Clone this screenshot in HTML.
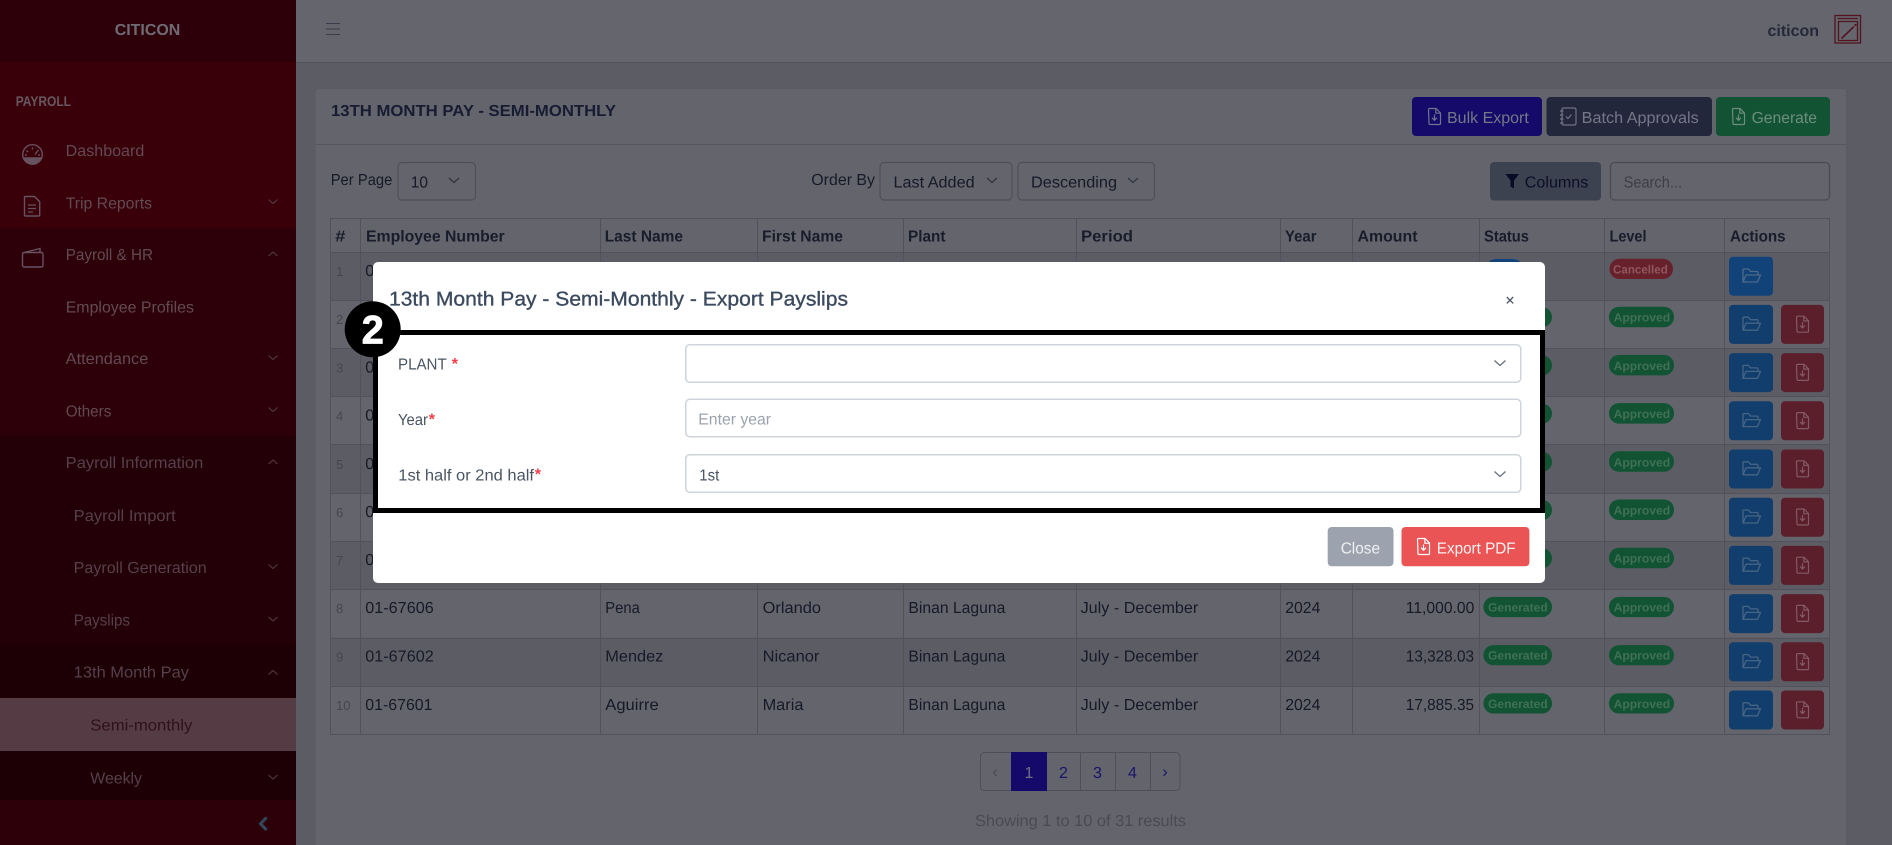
<!DOCTYPE html>
<html lang="en">
<head>
<meta charset="utf-8">
<title>13th Month Pay - Semi-Monthly - Export Payslips</title>
<style>
html,body{margin:0;padding:0;width:1892px;height:845px;overflow:hidden;background:#767681}
svg{display:block}
text{font-family:"Liberation Sans",sans-serif;font-size:16px;text-rendering:geometricPrecision}
.nav{fill:#7e5f6b}.sub{fill:#6e5260}
.th{font-weight:700;fill:#1f2438}
.td{fill:#1d2133}.num{fill:#5a5a68;font-size:13px}
.bd{font-size:12px;font-weight:700;fill:#54906f}
.lbl{fill:#4b5563}.star{fill:#f43f4a;font-weight:700}
.wb{fill:#9499ac}
.chev{fill:none;stroke:#6f5060;stroke-width:1}
.sel{fill:none;stroke:#3f4356;stroke-width:1.3}
.ctl{fill:none;stroke:#666675;stroke-width:1.2}
.mchev{fill:none;stroke:#6b7280;stroke-width:1.3}
</style>
</head>
<body>
<svg xmlns="http://www.w3.org/2000/svg" width="1892" height="845" viewBox="0 0 1892 845">
<defs>
<g id="file"><path d="M1.500 1.500a1 1 0 0 1 1-1h6.500l4.500 4.500v10.500a1 1 0 0 1-1 1h-9.500a1 1 0 0 1-1-1z" fill="none" stroke="currentColor" stroke-width="1.200"/><path d="M8.800 .7v4.500h4.500M7.500 6.500v5.500M5 9.800l2.500 2.500 2.500-2.500" fill="none" stroke="currentColor" stroke-width="1.200"/></g>
<g id="folder"><path d="M1 15V3a1 1 0 0 1 1-1h4.500l2 2.500h6.500a1 1 0 0 1 1 1V8M1 15l3-7h14.500l-3 7z" fill="none" stroke="currentColor" stroke-width="1.300" stroke-linejoin="round"/></g>
<g id="acts">
<rect x="1729" y="4.700" width="44" height="39" rx="4" fill="#16508c"/>
<use href="#folder" x="1742" y="15" color="#5a80a8"/>
<rect x="1781" y="4.700" width="43" height="39" rx="4" fill="#742836"/>
<use href="#file" x="1795" y="15.500" color="#a8747e"/>
</g>
<g id="blueact">
<rect x="1729" y="4.700" width="44" height="39" rx="4" fill="#16569c"/>
<use href="#folder" x="1742" y="15" color="#6388b0"/>
</g>
</defs>

<!-- sidebar -->
<rect width="296" height="845" fill="#3a000c"/>
<rect y="62" width="296" height="166" fill="#4a000c"/>
<rect y="436" width="296" height="209" fill="#2e0009"/>
<rect y="645" width="296" height="155" fill="#260008"/>
<rect y="698" width="296" height="53" fill="#6e4d58"/>
<text x="114.700" y="35" textLength="65.600" lengthAdjust="spacingAndGlyphs" font-weight="700" fill="#8f8a97">CITICON</text>
<text x="15.700" y="106" textLength="55.300" lengthAdjust="spacingAndGlyphs" font-weight="700" style="font-size:14px" fill="#85707c">PAYROLL</text>

<g fill="none" stroke="#85697a" stroke-width="1.400">
<circle cx="32.500" cy="154.500" r="9.800"/>
<path d="M23.500 158h18a10 10 0 0 1-18 0z" fill="#85697a"/>
<path d="M32.500 147.500v2M26.500 150.500l1.500 1.500M38.500 150l-3.500 4.500M25 155h1.800M38.200 155H40"/>
<path d="M25.500 197h9l5.200 5.200v13.300a1 1 0 0 1-1 1H25.500a1 1 0 0 1-1-1V198a1 1 0 0 1 1-1z" transform="translate(0,-.5)"/>
<path d="M28 205h8M28 208.500h8M28 212h5" stroke-width="1.200"/>
<rect x="22.500" y="252.500" width="20.500" height="14.500" rx="1.500"/>
<path d="M24 252.500l16-4v4"/>
</g>

<text class="nav" x="65.700" y="155.800" textLength="78.600" lengthAdjust="spacingAndGlyphs">Dashboard</text>
<text class="nav" x="65.700" y="208.500" textLength="86.300" lengthAdjust="spacingAndGlyphs">Trip Reports</text>
<text class="nav" x="65.700" y="260" textLength="87.300" lengthAdjust="spacingAndGlyphs">Payroll &amp; HR</text>
<text class="nav" x="65.700" y="312.500" textLength="128.300" lengthAdjust="spacingAndGlyphs">Employee Profiles</text>
<text class="nav" x="65.700" y="364" textLength="82.600" lengthAdjust="spacingAndGlyphs">Attendance</text>
<text class="nav" x="65.700" y="416.500" textLength="45.600" lengthAdjust="spacingAndGlyphs">Others</text>
<text class="sub" x="65.700" y="468" textLength="137.600" lengthAdjust="spacingAndGlyphs">Payroll Information</text>
<text class="sub" x="73.700" y="521" textLength="102" lengthAdjust="spacingAndGlyphs">Payroll Import</text>
<text class="sub" x="73.700" y="573" textLength="133" lengthAdjust="spacingAndGlyphs">Payroll Generation</text>
<text class="sub" x="73.700" y="625.500" textLength="56.300" lengthAdjust="spacingAndGlyphs">Payslips</text>
<text class="sub" x="73.700" y="677.500" textLength="115.300" lengthAdjust="spacingAndGlyphs">13th Month Pay</text>
<text x="90.300" y="730.500" textLength="102" lengthAdjust="spacingAndGlyphs" fill="#3e1522">Semi-monthly</text>
<text class="sub" x="90.300" y="783.500" textLength="51.700" lengthAdjust="spacingAndGlyphs">Weekly</text>

<path class="chev" d="M268.500 199.500l4.500 4 4.500-4M268.500 256l4.500-4 4.500 4M268.500 355.500l4.500 4 4.500-4M268.500 407.500l4.500 4 4.500-4M268.500 464l4.500-4 4.500 4M268.500 564.500l4.500 4 4.500-4M268.500 617l4.500 4 4.500-4M268.500 674.500l4.500-4 4.500 4M268.500 775l4.500 4 4.500-4"/>
<path d="M266.500 817.500l-6 6.200 6 6.200" fill="none" stroke="#3f5e78" stroke-width="3"/>

<!-- main -->
<rect x="296" width="1596" height="845" fill="#767681"/>
<rect x="296" width="1596" height="62" fill="#82828c"/>
<rect x="296" y="62" width="1596" height="1" fill="#6c6c7a"/>
<path d="M326 23.500h14M326 29h14M326 34.500h14" stroke="#4a4e60" stroke-width="1" fill="none"/>
<text x="1767.500" y="36" textLength="51.500" lengthAdjust="spacingAndGlyphs" font-weight="700" fill="#2f3447">citicon</text>
<g fill="none" stroke="#6a1a28" stroke-width="1.300">
<rect x="1835" y="15.500" width="25.500" height="27.500"/>
<path d="M1837.500 18.500h20.500M1838.500 21.500h19V40.500h-19z"/>
<path d="M1841.500 38.500l12.500-12" stroke-width="1.600"/>
<circle cx="1855.500" cy="25" r=".5"/>
</g>

<!-- card -->
<rect x="315" y="88.500" width="1531.500" height="770" rx="3" fill="#81818b" stroke="#747482"/>
<rect x="316" y="144" width="1530" height="1" fill="#6f6f7c"/>
<text x="331" y="116" textLength="285" lengthAdjust="spacingAndGlyphs" font-weight="700" fill="#1f2540">13TH MONTH PAY - SEMI-MONTHLY</text>

<rect x="1412" y="97" width="130" height="39" rx="4" fill="#1b0e87"/>
<use href="#file" x="1427" y="108" color="#8f94b4"/>
<text class="wb" x="1447" y="123" textLength="81.800" lengthAdjust="spacingAndGlyphs">Bulk Export</text>
<rect x="1546.500" y="97" width="165.500" height="39" rx="4" fill="#2e334d"/>
<g fill="none" stroke="#8f94a6" stroke-width="1.200"><rect x="1562" y="108" width="14" height="17" rx="1.500"/><path d="M1560 111h3.500M1560 115h3.500M1560 119h3.500M1560 123h3.500M1566 116.500l2 2 3.500-4"/></g>
<text class="wb" x="1581.700" y="123" textLength="117" lengthAdjust="spacingAndGlyphs">Batch Approvals</text>
<rect x="1716" y="97" width="114" height="39" rx="4" fill="#166b40"/>
<use href="#file" x="1731" y="108" color="#8fb5a2"/>
<text x="1751.600" y="123" textLength="65.400" lengthAdjust="spacingAndGlyphs" fill="#8fb5a2">Generate</text>

<text class="td" x="330.700" y="185" textLength="61.700" lengthAdjust="spacingAndGlyphs">Per Page</text>
<rect class="ctl" x="398" y="162.500" width="77.500" height="37.500" rx="4"/>
<text class="td" x="410.800" y="187.500" textLength="17.200" lengthAdjust="spacingAndGlyphs">10</text>
<path class="sel" d="M449 178l5 4.500 5-4.500"/>
<text class="td" x="811.300" y="185" textLength="63.700" lengthAdjust="spacingAndGlyphs">Order By</text>
<rect class="ctl" x="880" y="162.500" width="132" height="37.500" rx="4"/>
<text class="td" x="893.500" y="187.500" textLength="81.100" lengthAdjust="spacingAndGlyphs">Last Added</text>
<path class="sel" d="M987 178l5 4.500 5-4.500"/>
<rect class="ctl" x="1018" y="162.500" width="136.500" height="37.500" rx="4"/>
<text class="td" x="1031" y="187.500" textLength="86" lengthAdjust="spacingAndGlyphs">Descending</text>
<path class="sel" d="M1128 178l5 4.500 5-4.500"/>
<rect x="1490" y="162" width="111" height="38.500" rx="4" fill="#4f5568"/>
<path d="M1505.500 174h13.500l-5 6.500v8l-3.500-2v-6z" fill="#0b1030"/>
<text x="1524.800" y="187.500" textLength="63.500" lengthAdjust="spacingAndGlyphs" fill="#0f1430">Columns</text>
<rect x="1610.500" y="162.500" width="219" height="37.500" rx="4" fill="none" stroke="#5d5f6e" stroke-width="1.300"/>
<text x="1623.600" y="187.500" textLength="58.400" lengthAdjust="spacingAndGlyphs" fill="#4e505f">Search...</text>

<!-- table -->
<rect x="330" y="252" width="1500" height="48.200" fill="#777782"/>
<rect x="330" y="348.400" width="1500" height="48.200" fill="#777782"/>
<rect x="330" y="444.800" width="1500" height="48.200" fill="#777782"/>
<rect x="330" y="541.200" width="1500" height="48.200" fill="#777782"/>
<rect x="330" y="637.600" width="1500" height="48.200" fill="#777782"/>
<path fill="none" stroke="#6a6a78" stroke-width="1" d="M330 218.500H1830M330 252.500H1830M330 300.500H1830M330 348.500H1830M330 396.500H1830M330 444.500H1830M330 493.500H1830M330 541.500H1830M330 589.500H1830M330 638.500H1830M330 686.500H1830M330 734.500H1830M330.500 218V735M360.500 218V735M600.500 218V735M757.500 218V735M903.500 218V735M1076.500 218V735M1280.500 218V735M1352.500 218V735M1479.500 218V735M1604.500 218V735M1724.500 218V735M1829.500 218V735"/>

<text class="th" x="335.300" y="241.500" textLength="10.200" lengthAdjust="spacingAndGlyphs">#</text>
<text class="th" x="366" y="241.500" textLength="138.700" lengthAdjust="spacingAndGlyphs">Employee Number</text>
<text class="th" x="604.700" y="241.500" textLength="78.300" lengthAdjust="spacingAndGlyphs">Last Name</text>
<text class="th" x="762" y="241.500" textLength="81" lengthAdjust="spacingAndGlyphs">First Name</text>
<text class="th" x="908" y="241.500" textLength="37.500" lengthAdjust="spacingAndGlyphs">Plant</text>
<text class="th" x="1081" y="241.500" textLength="52" lengthAdjust="spacingAndGlyphs">Period</text>
<text class="th" x="1285" y="241.500" textLength="31.500" lengthAdjust="spacingAndGlyphs">Year</text>
<text class="th" x="1357.500" y="241.500" textLength="60" lengthAdjust="spacingAndGlyphs">Amount</text>
<text class="th" x="1484" y="241.500" textLength="45" lengthAdjust="spacingAndGlyphs">Status</text>
<text class="th" x="1609.500" y="241.500" textLength="37" lengthAdjust="spacingAndGlyphs">Level</text>
<text class="th" x="1730" y="241.500" textLength="55.600" lengthAdjust="spacingAndGlyphs">Actions</text>

<!-- rows 1-7 (mostly behind modal) -->
<g transform="translate(0,252)"><text class="num" x="336" y="24">1</text><text class="td" x="365.300" y="24">0</text><rect x="1486" y="7" width="37" height="20" rx="10" fill="#16569c"/><rect x="1609.500" y="6.700" width="63.500" height="20.300" rx="10" fill="#842b38"/><text x="1613" y="21.500" textLength="54.800" lengthAdjust="spacingAndGlyphs" style="font-size:12px;font-weight:700" fill="#b86f7a">Cancelled</text><use href="#blueact"/></g>
<g transform="translate(0,300.200)"><text class="num" x="336" y="24">2</text><text class="td" x="365.300" y="24">0</text><rect x="1483.400" y="7" width="68.600" height="20" rx="10" fill="#166b40"/><rect x="1609" y="6.500" width="65" height="20.500" rx="10" fill="#166b40"/><text class="bd" x="1613.600" y="21.500" textLength="56.600" lengthAdjust="spacingAndGlyphs">Approved</text><use href="#acts"/></g>
<g transform="translate(0,348.400)"><text class="num" x="336" y="24">3</text><text class="td" x="365.300" y="24">0</text><rect x="1483.400" y="7" width="68.600" height="20" rx="10" fill="#166b40"/><rect x="1609" y="6.500" width="65" height="20.500" rx="10" fill="#166b40"/><text class="bd" x="1613.600" y="21.500" textLength="56.600" lengthAdjust="spacingAndGlyphs">Approved</text><use href="#acts"/></g>
<g transform="translate(0,396.600)"><text class="num" x="336" y="24">4</text><text class="td" x="365.300" y="24">0</text><rect x="1483.400" y="7" width="68.600" height="20" rx="10" fill="#166b40"/><rect x="1609" y="6.500" width="65" height="20.500" rx="10" fill="#166b40"/><text class="bd" x="1613.600" y="21.500" textLength="56.600" lengthAdjust="spacingAndGlyphs">Approved</text><use href="#acts"/></g>
<g transform="translate(0,444.800)"><text class="num" x="336" y="24">5</text><text class="td" x="365.300" y="24">0</text><rect x="1483.400" y="7" width="68.600" height="20" rx="10" fill="#166b40"/><rect x="1609" y="6.500" width="65" height="20.500" rx="10" fill="#166b40"/><text class="bd" x="1613.600" y="21.500" textLength="56.600" lengthAdjust="spacingAndGlyphs">Approved</text><use href="#acts"/></g>
<g transform="translate(0,493)"><text class="num" x="336" y="24">6</text><text class="td" x="365.300" y="24">0</text><rect x="1483.400" y="7" width="68.600" height="20" rx="10" fill="#166b40"/><rect x="1609" y="6.500" width="65" height="20.500" rx="10" fill="#166b40"/><text class="bd" x="1613.600" y="21.500" textLength="56.600" lengthAdjust="spacingAndGlyphs">Approved</text><use href="#acts"/></g>
<g transform="translate(0,541.200)"><text class="num" x="336" y="24">7</text><text class="td" x="365.300" y="24">0</text><rect x="1483.400" y="7" width="68.600" height="20" rx="10" fill="#166b40"/><rect x="1609" y="6.500" width="65" height="20.500" rx="10" fill="#166b40"/><text class="bd" x="1613.600" y="21.500" textLength="56.600" lengthAdjust="spacingAndGlyphs">Approved</text><use href="#acts"/></g>

<!-- row 8 -->
<g transform="translate(0,589.400)">
<text class="num" x="336" y="23.600">8</text>
<text class="td" x="365.300" y="23.600" textLength="68.400" lengthAdjust="spacingAndGlyphs">01-67606</text>
<text class="td" x="605.300" y="23.600" textLength="34.500" lengthAdjust="spacingAndGlyphs">Pena</text>
<text class="td" x="762.600" y="23.600" textLength="58.400" lengthAdjust="spacingAndGlyphs">Orlando</text>
<text class="td" x="908.400" y="23.600" textLength="97" lengthAdjust="spacingAndGlyphs">Binan Laguna</text>
<text class="td" x="1080.600" y="23.600" textLength="117.700" lengthAdjust="spacingAndGlyphs">July - December</text>
<text class="td" x="1285.200" y="23.600" textLength="35.200" lengthAdjust="spacingAndGlyphs">2024</text>
<text class="td" x="1405.800" y="23.600" textLength="68.500" lengthAdjust="spacingAndGlyphs">11,000.00</text>
<rect x="1483.400" y="7.500" width="68.600" height="20.200" rx="10" fill="#166b40"/><text class="bd" x="1488" y="22" textLength="59.700" lengthAdjust="spacingAndGlyphs">Generated</text>
<rect x="1609" y="7.500" width="65" height="20.200" rx="10" fill="#166b40"/><text class="bd" x="1613.600" y="22" textLength="56.600" lengthAdjust="spacingAndGlyphs">Approved</text>
<use href="#acts"/>
</g>
<!-- row 9 -->
<g transform="translate(0,637.600)">
<text class="num" x="336" y="24">9</text>
<text class="td" x="365.300" y="24" textLength="68.400" lengthAdjust="spacingAndGlyphs">01-67602</text>
<text class="td" x="605.300" y="24" textLength="58" lengthAdjust="spacingAndGlyphs">Mendez</text>
<text class="td" x="762.600" y="24" textLength="56.800" lengthAdjust="spacingAndGlyphs">Nicanor</text>
<text class="td" x="908.400" y="24" textLength="97" lengthAdjust="spacingAndGlyphs">Binan Laguna</text>
<text class="td" x="1080.600" y="24" textLength="117.700" lengthAdjust="spacingAndGlyphs">July - December</text>
<text class="td" x="1285.200" y="24" textLength="35.200" lengthAdjust="spacingAndGlyphs">2024</text>
<text class="td" x="1405.800" y="24" textLength="68.200" lengthAdjust="spacingAndGlyphs">13,328.03</text>
<rect x="1483.400" y="7.500" width="68.600" height="20.200" rx="10" fill="#166b40"/><text class="bd" x="1488" y="22" textLength="59.700" lengthAdjust="spacingAndGlyphs">Generated</text>
<rect x="1609" y="7.500" width="65" height="20.200" rx="10" fill="#166b40"/><text class="bd" x="1613.600" y="22" textLength="56.600" lengthAdjust="spacingAndGlyphs">Approved</text>
<use href="#acts"/>
</g>
<!-- row 10 -->
<g transform="translate(0,685.800)">
<text class="num" x="336" y="24">10</text>
<text class="td" x="365.300" y="24" textLength="67.200" lengthAdjust="spacingAndGlyphs">01-67601</text>
<text class="td" x="605.300" y="24" textLength="53.400" lengthAdjust="spacingAndGlyphs">Aguirre</text>
<text class="td" x="762.600" y="24" textLength="40.800" lengthAdjust="spacingAndGlyphs">Maria</text>
<text class="td" x="908.400" y="24" textLength="97" lengthAdjust="spacingAndGlyphs">Binan Laguna</text>
<text class="td" x="1080.600" y="24" textLength="117.700" lengthAdjust="spacingAndGlyphs">July - December</text>
<text class="td" x="1285.200" y="24" textLength="35.200" lengthAdjust="spacingAndGlyphs">2024</text>
<text class="td" x="1405.800" y="24" textLength="68.200" lengthAdjust="spacingAndGlyphs">17,885.35</text>
<rect x="1483.400" y="7.500" width="68.600" height="20.200" rx="10" fill="#166b40"/><text class="bd" x="1488" y="22" textLength="59.700" lengthAdjust="spacingAndGlyphs">Generated</text>
<rect x="1609" y="7.500" width="65" height="20.200" rx="10" fill="#166b40"/><text class="bd" x="1613.600" y="22" textLength="56.600" lengthAdjust="spacingAndGlyphs">Approved</text>
<use href="#acts"/>
</g>

<!-- pagination -->
<rect x="980.500" y="752.500" width="199.500" height="38" rx="4" fill="none" stroke="#666675"/>
<rect x="1011" y="752" width="36" height="39" fill="#1b0e87"/>
<path d="M1080.500 753v37M1115.500 753v37M1150.500 753v37" stroke="#666675"/>
<text x="995" y="777" text-anchor="middle" fill="#5c5c6a">‹</text>
<text x="1029" y="778" text-anchor="middle" fill="#8e8ea8">1</text>
<text x="1063.500" y="778" text-anchor="middle" fill="#1f1a8a">2</text>
<text x="1097.500" y="778" text-anchor="middle" fill="#1f1a8a">3</text>
<text x="1132.500" y="778" text-anchor="middle" fill="#1f1a8a">4</text>
<text x="1165" y="777" text-anchor="middle" fill="#1f1a8a">›</text>
<text x="975" y="826" textLength="211" lengthAdjust="spacingAndGlyphs" fill="#5f5f6d">Showing 1 to 10 of 31 results</text>

<!-- backdrop -->
<rect width="1892" height="845" fill="#000" opacity=".22"/>

<!-- modal -->
<rect x="373" y="262" width="1172" height="321" rx="5" fill="#ffffff"/>
<text x="389" y="305.700" textLength="459" lengthAdjust="spacingAndGlyphs" style="font-size:20px;stroke:#3b4a5e;stroke-width:.35" fill="#3b4a5e">13th Month Pay - Semi-Monthly - Export Payslips</text>
<path d="M1506.800 297l6.400 6.400M1513.200 297l-6.400 6.400" stroke="#4b5563" stroke-width="1.300"/>

<text class="lbl" x="398" y="369.500" textLength="48.700" lengthAdjust="spacingAndGlyphs">PLANT</text><text class="star" x="451.700" y="369">*</text>
<text class="lbl" x="398" y="425" textLength="30" lengthAdjust="spacingAndGlyphs">Year</text><text class="star" x="428.700" y="424.500">*</text>
<text class="lbl" x="398.300" y="480.700" textLength="135.700" lengthAdjust="spacingAndGlyphs">1st half or 2nd half</text><text class="star" x="534.700" y="479.500">*</text>

<g fill="#fff" stroke="#ced4da" stroke-width="1.500">
<rect x="685.750" y="344.750" width="835" height="37.500" rx="4"/>
<rect x="685.750" y="399.250" width="835" height="37.500" rx="4"/>
<rect x="685.750" y="454.750" width="835" height="37.500" rx="4"/>
</g>
<text x="698.300" y="424.700" textLength="72.700" lengthAdjust="spacingAndGlyphs" fill="#9ca3af">Enter year</text>
<text x="699.300" y="480.700" textLength="20" lengthAdjust="spacingAndGlyphs" fill="#4b5563">1st</text>
<path class="mchev" d="M1494.500 360.500l5.500 5 5.500-5M1494.500 471.500l5.500 5 5.500-5"/>

<rect x="1327.700" y="527" width="65.800" height="39.300" rx="4" fill="#9ca3af"/>
<text x="1340.700" y="553.300" textLength="39.300" lengthAdjust="spacingAndGlyphs" fill="#f0f1f3">Close</text>
<rect x="1401.500" y="527" width="127.900" height="39.300" rx="4" fill="#ea5455"/>
<use href="#file" x="1416" y="538" color="#ffffff"/>
<text x="1436.800" y="553.300" textLength="78.800" lengthAdjust="spacingAndGlyphs" fill="#fdf1f1">Export PDF</text>

<!-- annotation -->
<rect x="375.500" y="332.500" width="1167" height="178" fill="none" stroke="#000" stroke-width="5"/>
<circle cx="372.700" cy="329.300" r="28" fill="#000"/>
<text x="372.700" y="343.500" text-anchor="middle" style="font-size:40px;font-weight:700;stroke:#fff;stroke-width:.8" fill="#fff">2</text>
</svg>
</body>
</html>
